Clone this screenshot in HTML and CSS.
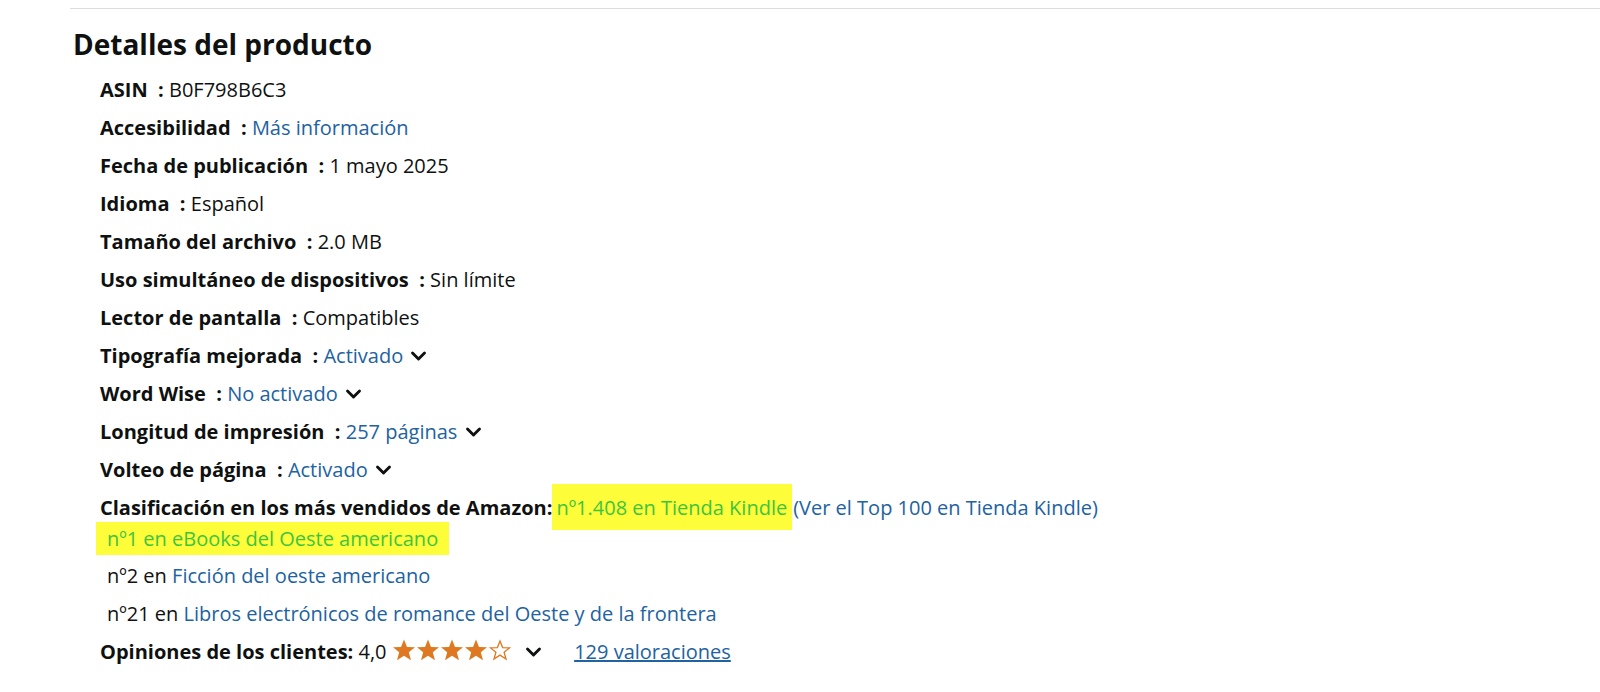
FILE: index.html
```html
<!DOCTYPE html>
<html lang="es">
<head>
    <meta charset="UTF-8">
    <title>Detalles del producto</title>
    <link rel="stylesheet" href="styles.css">
</head>
<body>

<div class="details">
    <hr class="divider">
    <h2>Detalles del producto</h2>

    <ul class="detail-list">
        <li><span class="label">ASIN &nbsp;: </span><span>B0F798B6C3</span></li>
        <li><span class="label">Accesibilidad &nbsp;: </span><a href="#">Más información</a></li>
        <li><span class="label">Fecha de publicación &nbsp;: </span><span>1 mayo 2025</span></li>
        <li><span class="label">Idioma &nbsp;: </span><span>Español</span></li>
        <li><span class="label">Tamaño del archivo &nbsp;: </span><span>2.0 MB</span></li>
        <li><span class="label">Uso simultáneo de dispositivos &nbsp;: </span><span>Sin límite</span></li>
        <li><span class="label">Lector de pantalla &nbsp;: </span><span>Compatibles</span></li>
        <li><span class="label">Tipografía mejorada &nbsp;: </span><a href="#">Activado</a> <svg class="chevron" viewBox="0 0 14 10"><path d="M2 2.5 L7 7.5 L12 2.5"/></svg></li>
        <li><span class="label">Word Wise &nbsp;: </span><a href="#">No activado</a> <svg class="chevron" viewBox="0 0 14 10"><path d="M2 2.5 L7 7.5 L12 2.5"/></svg></li>
        <li><span class="label">Longitud de impresión &nbsp;: </span><a href="#">257 páginas</a> <svg class="chevron" viewBox="0 0 14 10"><path d="M2 2.5 L7 7.5 L12 2.5"/></svg></li>
        <li><span class="label">Volteo de página &nbsp;: </span><a href="#">Activado</a> <svg class="chevron" viewBox="0 0 14 10"><path d="M2 2.5 L7 7.5 L12 2.5"/></svg></li>
        <li class="rank">
            <span class="label">Clasificación en los más vendidos de Amazon:</span><span class="hl hl-main">nº1.408 en Tienda Kindle</span><a href="#">(Ver el Top 100 en Tienda Kindle)</a>
            <ul class="sub-list">
                <li><span class="hl hl-sub">nº1 en eBooks del Oeste americano</span></li>
                <li>nº2 en <a href="#">Ficción del oeste americano</a></li>
                <li>nº21 en <a href="#">Libros electrónicos de romance del Oeste y de la frontera</a></li>
            </ul>
        </li>
        <li class="reviews">
            <span class="label">Opiniones de los clientes:</span> 4,0
            <span class="stars">
                <svg viewBox="0 0 24 24"><path class="full" d="M12 1.5 L15 9 L23 9.3 L16.8 14.3 L19 22.2 L12 17.7 L5 22.2 L7.2 14.3 L1 9.3 L9 9 Z"/></svg>
                <svg viewBox="0 0 24 24"><path class="full" d="M12 1.5 L15 9 L23 9.3 L16.8 14.3 L19 22.2 L12 17.7 L5 22.2 L7.2 14.3 L1 9.3 L9 9 Z"/></svg>
                <svg viewBox="0 0 24 24"><path class="full" d="M12 1.5 L15 9 L23 9.3 L16.8 14.3 L19 22.2 L12 17.7 L5 22.2 L7.2 14.3 L1 9.3 L9 9 Z"/></svg>
                <svg viewBox="0 0 24 24"><path class="full" d="M12 1.5 L15 9 L23 9.3 L16.8 14.3 L19 22.2 L12 17.7 L5 22.2 L7.2 14.3 L1 9.3 L9 9 Z"/></svg>
                <svg viewBox="0 0 24 24"><path class="empty" d="M12 3 L14.6 9.6 L21.5 9.9 L16.1 14.3 L18 21 L12 17.1 L6 21 L7.9 14.3 L2.5 9.9 L9.4 9.6 Z"/></svg>
            </span>
            <svg class="chevron" viewBox="0 0 14 10"><path d="M2 2.5 L7 7.5 L12 2.5"/></svg>
            <a href="#" class="count">129 valoraciones</a>
        </li>
    </ul>
</div>

</body>
</html>
```

FILE: styles.css
```css
/* Page */
body {
    margin: 0;
    background: #fff;
    color: #0f1111;
    font-family: "Open Sans", "Noto Sans", sans-serif;
    font-size: 20px;
}

a {
    color: #2162a1;
    text-decoration: none;
}

/* Details block */
.details {
    padding-left: 70px;
}

.divider {
    border: 0;
    border-top: 1px solid #dcdcdc;
    margin: 8px 0 0 0;
}

h2 {
    font-size: 28px;
    font-weight: 700;
    margin: 19px 0 0 3px;
    line-height: 32px;
}

.detail-list {
    list-style: none;
    margin: 11px 0 0 0;
    padding: 0 0 0 30px;
}

.detail-list > li {
    line-height: 38px;
    white-space: nowrap;
}

.label {
    font-weight: 700;
}

.chevron {
    width: 17px;
    height: 12px;
    margin-left: 2px;
    vertical-align: 1px;
}

.chevron path {
    fill: none;
    stroke: #0f1111;
    stroke-width: 2.4;
    stroke-linecap: round;
    stroke-linejoin: round;
}

/* Best sellers ranking */
.hl {
    background: #fdfd3a;
    color: #3fc43f;
}

.hl-main {
    display: inline-block;
    padding: 5px 5px 4px 4px;
    line-height: 37px;
    margin: -5px 1px -4px 0;
    vertical-align: top;
}

.sub-list {
    list-style: none;
    margin: -8px 0 0 0;
    padding: 0 0 0 7px;
}

.sub-list li {
    line-height: 38px;
}

.hl-sub {
    display: inline-block;
    padding: 0 11px 0 11px;
    margin-left: -11px;
    line-height: 33px;
    vertical-align: top;
    margin-top: 3px;
}

/* Reviews */
.stars {
    display: inline-flex;
    vertical-align: -3px;
}

.stars svg {
    width: 24px;
    height: 24px;
}

.stars .full {
    fill: #de7921;
}

.stars .empty {
    fill: none;
    stroke: #de7921;
    stroke-width: 1.3;
}

.reviews .chevron {
    margin-left: 8px;
}

.count {
    text-decoration: underline;
    margin-left: 27px;
}
```
